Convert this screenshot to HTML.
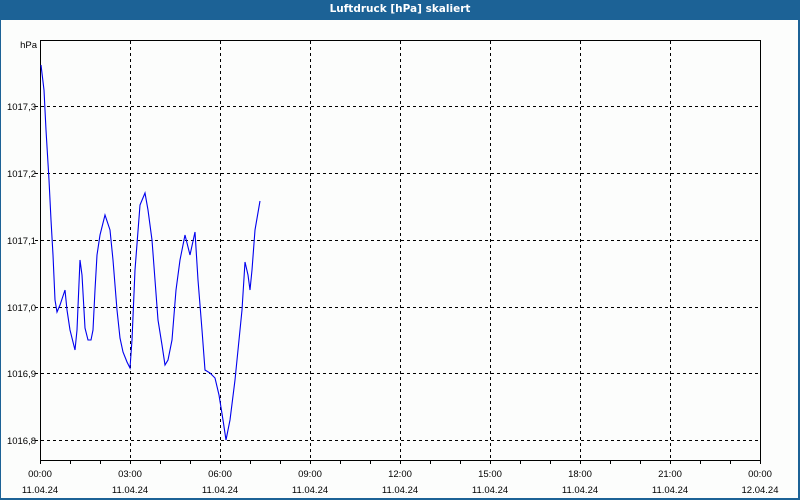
<!DOCTYPE html>
<html><head><meta charset="utf-8"><style>
html,body{margin:0;padding:0;}
body{width:800px;height:500px;background:#1c6296;position:relative;overflow:hidden;font-family:"Liberation Sans",sans-serif;}
#in{position:absolute;left:1px;top:20px;width:797px;height:478px;background:#fcfdfc;}
#t{position:absolute;left:0;top:0;width:800px;height:20px;line-height:19px;text-align:center;color:#fff;font-weight:bold;font-size:10.5px;font-family:"DejaVu Sans",sans-serif;}
</style></head><body>
<div id="t">Luftdruck [hPa] skaliert</div>
<div id="in"></div>
<svg width="800" height="500" style="position:absolute;left:0;top:0" font-family="Liberation Sans, sans-serif" font-size="9.5" fill="#000">
<g stroke="#000" stroke-width="1" stroke-dasharray="3,3" shape-rendering="crispEdges">
<line x1="130.5" y1="41" x2="130.5" y2="460"/><line x1="220.5" y1="41" x2="220.5" y2="460"/><line x1="310.5" y1="41" x2="310.5" y2="460"/><line x1="400.5" y1="41" x2="400.5" y2="460"/><line x1="490.5" y1="41" x2="490.5" y2="460"/><line x1="580.5" y1="41" x2="580.5" y2="460"/><line x1="670.5" y1="41" x2="670.5" y2="460"/>
<line x1="35" y1="106.5" x2="760" y2="106.5"/><line x1="35" y1="173.5" x2="760" y2="173.5"/><line x1="35" y1="240.5" x2="760" y2="240.5"/><line x1="35" y1="307.5" x2="760" y2="307.5"/><line x1="35" y1="373.5" x2="760" y2="373.5"/><line x1="35" y1="440.5" x2="760" y2="440.5"/>
</g>
<g stroke="#000" stroke-width="1" shape-rendering="crispEdges" fill="none">
<rect x="40.5" y="40.5" width="720" height="420"/>
<path d="M70.5 460v4M100.5 460v4M130.5 460v4M160.5 460v4M190.5 460v4M220.5 460v4M250.5 460v4M280.5 460v4M310.5 460v4M340.5 460v4M370.5 460v4M400.5 460v4M430.5 460v4M460.5 460v4M490.5 460v4M520.5 460v4M550.5 460v4M580.5 460v4M610.5 460v4M640.5 460v4M670.5 460v4M700.5 460v4M730.5 460v4M760.5 460v4M40.5 460v4"/>
</g>
<polyline fill="none" stroke="#0000ee" stroke-width="1.1" points="41,65 44,90 46,130 49,180 51,220 53,255 55,300 57,312 60,305 65,290 67,310 70,330 75,350 77,330 80,260 82,275 85,328 88,340 91,340 93,330 95,290 97,255 100,235 105,215 110,230 113,260 117,310 120,338 123,352 127,362 130,368 132,340 135,270 140,205 145,193 148,210 152,240 155,280 158,320 162,345 165,365 168,360 172,340 176,290 180,260 185,235 190,255 195,232 198,280 202,330 205,370 210,373 215,378 219,395 223,420 226,440 230,420 235,380 238,350 242,310 245,262 248,275 250,290 252,270 255,230 260,201"/>
<g text-anchor="end"><text x="37" y="48">hPa</text><text x="36" y="110">1017,3</text><text x="36" y="177">1017,2</text><text x="36" y="244">1017,1</text><text x="36" y="311">1017,0</text><text x="36" y="377">1016,9</text><text x="36" y="444">1016,8</text></g>
<g text-anchor="middle">
<text x="40" y="477">00:00</text><text x="40" y="493">11.04.24</text>
<text x="130" y="477">03:00</text><text x="130" y="493">11.04.24</text>
<text x="220" y="477">06:00</text><text x="220" y="493">11.04.24</text>
<text x="310" y="477">09:00</text><text x="310" y="493">11.04.24</text>
<text x="400" y="477">12:00</text><text x="400" y="493">11.04.24</text>
<text x="490" y="477">15:00</text><text x="490" y="493">11.04.24</text>
<text x="580" y="477">18:00</text><text x="580" y="493">11.04.24</text>
<text x="670" y="477">21:00</text><text x="670" y="493">11.04.24</text>
<text x="760" y="477">00:00</text><text x="760" y="493">12.04.24</text>
</g>
</svg>
</body></html>
